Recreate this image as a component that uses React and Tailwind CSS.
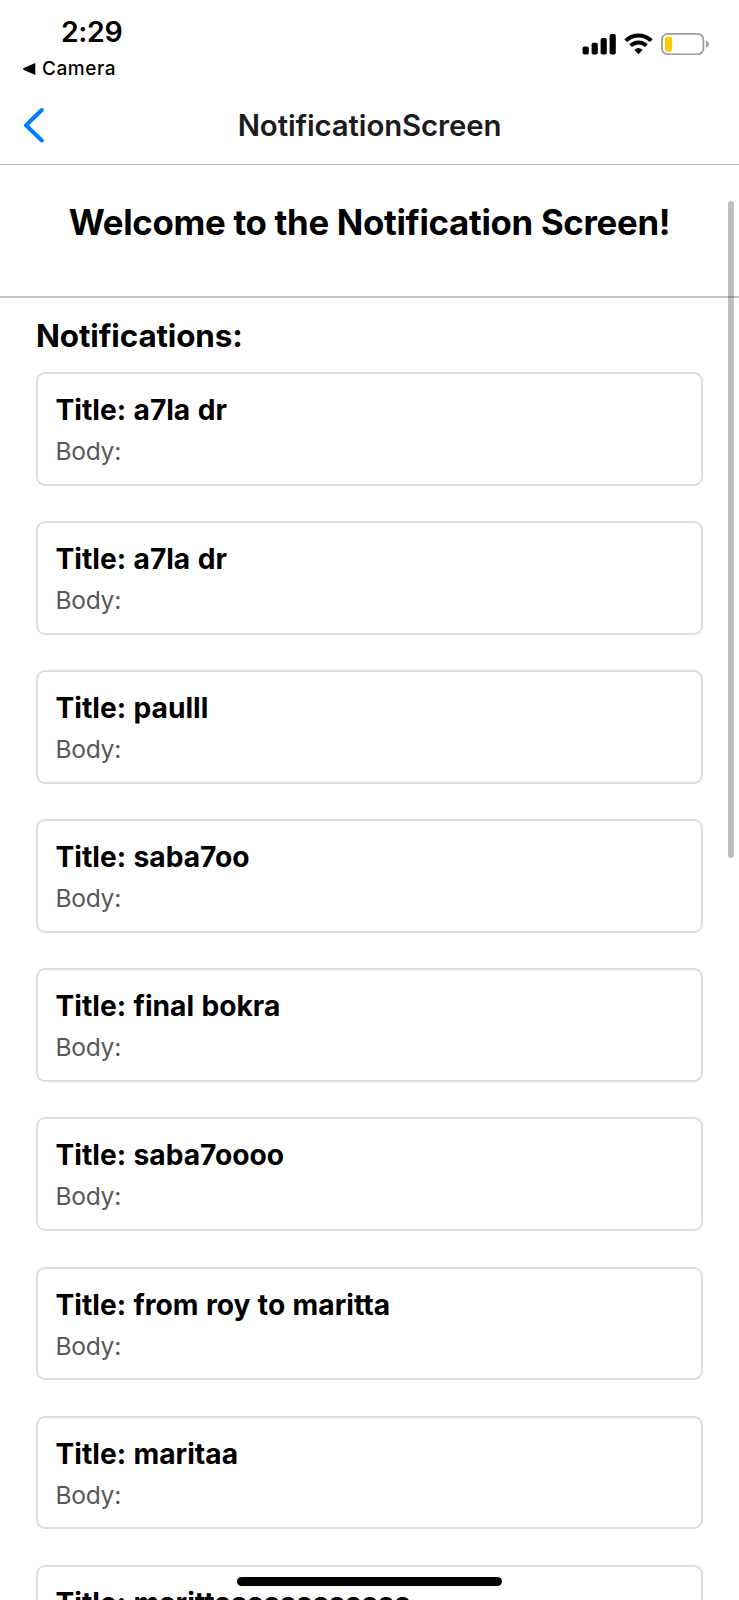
import React from 'react';

const notifications = [
  'a7la dr',
  'a7la dr',
  'paulll',
  'saba7oo',
  'final bokra',
  'saba7oooo',
  'from roy to maritta',
  'maritaa',
  'marittaaaaaaaaaaaa',
];

function StatusBar() {
  return (
    <div className="flex h-[86px] shrink-0 justify-between pr-[30px] pl-[23px]">
      <div className="flex flex-col pt-[14px]">
        <span className="pl-[38px] text-[28.5px] leading-9 font-semibold tracking-[-0.4px]">2:29</span>
        <div className="flex items-center gap-[6px] pt-[7px]">
          <svg width="13" height="13" viewBox="0 0 13 13" aria-hidden="true">
            <path d="M12.3.1v11.8L.8 6.9Q-.8 6 .8 5.1Z" />
          </svg>
          <span className="text-[19px] leading-6 font-medium tracking-[0.55px]">Camera</span>
        </div>
      </div>
      <div className="flex items-start gap-2 pt-[33px]">
        <svg width="34" height="22" viewBox="0 0 34 22" aria-hidden="true">
          <rect x="0.6" y="13.5" width="6.2" height="8" rx="1.8" />
          <rect x="9.6" y="9.7" width="6.2" height="11.8" rx="1.8" />
          <rect x="18.6" y="5" width="6.2" height="16.5" rx="1.8" />
          <rect x="27.6" y="1" width="6.2" height="20.5" rx="1.8" />
        </svg>
        <svg width="29" height="22" viewBox="0 0 29 22" aria-hidden="true">
          <g fill="none" stroke="#000" strokeWidth="3.9">
            <path d="M1.7 7.7a18.2 18.2 0 0 1 25.6 0" />
            <path d="M6.6 12.7a11.2 11.2 0 0 1 15.8 0" />
          </g>
          <path d="M14.5 21.2 10.8 17.5a.6.6 0 0 1 0-.9 5.8 5.8 0 0 1 7.4 0 .6.6 0 0 1 0 .9Z" />
        </svg>
        <svg width="48" height="22" viewBox="0 0 48 22" aria-hidden="true">
          <rect x="1" y="0.9" width="41.4" height="20.4" rx="5.6" fill="none" stroke="#9c9c9f" strokeWidth="1.8" />
          <rect x="4" y="3.8" width="7.2" height="14.8" rx="2.6" fill="#fecb00" />
          <path d="M45 7.6v7.2Q47.9 13.6 47.9 11.2T45 7.6Z" fill="#9c9c9f" />
        </svg>
      </div>
    </div>
  );
}

function NavBar() {
  return (
    <header className="grid h-[79px] shrink-0 grid-cols-[80px_1fr_80px] items-center border-b border-[#bcbcbe]">
      <button className="pl-[23px]" aria-label="Back">
        <svg width="22" height="36" viewBox="0 0 22 36" fill="none" aria-hidden="true">
          <path d="M18.8 3 3 18.3 18.8 33.5" stroke="#007aff" strokeWidth="4" strokeLinecap="round" strokeLinejoin="round" />
        </svg>
      </button>
      <h1 className="pt-[2px] text-center text-[29.4px] font-semibold tracking-[-0.12px] text-[#1c1c1e]">NotificationScreen</h1>
    </header>
  );
}

function NotificationCard({ title }) {
  return (
    <li className="h-[113.6px] shrink-0 rounded-[9px] border-2 border-[#dddddd] pt-[19px] pl-[17.5px]">
      <h3 className="text-[28.2px] leading-[34px] font-bold tracking-[-0.02px] whitespace-nowrap [font-variant-ligatures:none] [word-spacing:0.8px]">
        Title: {title}
      </h3>
      <p className="pt-[9px] text-[24.6px] leading-[30px] tracking-[-0.3px] text-[#585858]">Body:</p>
    </li>
  );
}

export default function App() {
  return (
    <div className="relative flex h-[1600px] w-[739px] flex-col overflow-hidden bg-white font-['Inter',sans-serif] text-black">
      <StatusBar />
      <NavBar />
      <main className="flex shrink-0 flex-col">
        <div className="flex h-[133px] justify-center border-b-2 border-[#c4c4c4] pt-[36px]">
          <h2 className="text-[34.8px] leading-[42px] font-bold tracking-[-0.3px] whitespace-nowrap">
            Welcome to the Notification Screen!
          </h2>
        </div>
        <section className="px-9 pt-[19px]">
          <h2 className="text-[31.4px] leading-[38px] font-bold tracking-[-0.12px]">Notifications:</h2>
          <ul className="flex flex-col gap-[35.5px] pt-[17px]">
            {notifications.map((title, i) => (
              <NotificationCard key={i} title={title} />
            ))}
          </ul>
        </section>
      </main>
      <div className="absolute top-[201px] right-[5px] h-[657px] w-[6px] rounded-full bg-black/25" />
      <div className="absolute bottom-[14px] left-[237px] h-[9px] w-[265px] rounded-full bg-black" />
    </div>
  );
}
